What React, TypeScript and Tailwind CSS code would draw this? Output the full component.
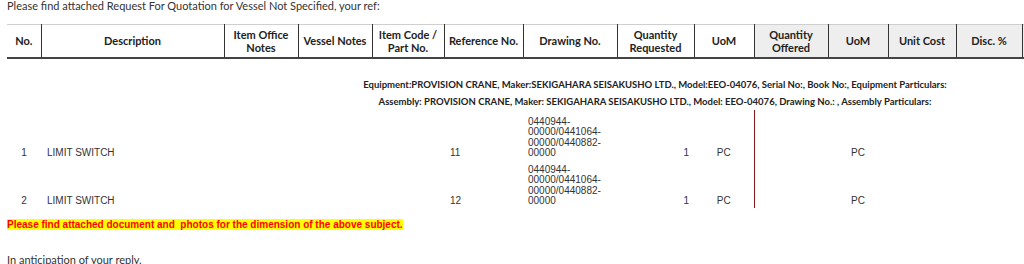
import React from "react";

const calibri = { fontFamily: 'Lato, "Open Sans", sans-serif' };
const arial = { fontFamily: '"Liberation Sans", Arial, sans-serif' };

const headers: { label: React.ReactNode; w: string; gray?: boolean }[] = [
  { label: "No.", w: "w-[34px]" },
  { label: "Description", w: "w-[183px]" },
  { label: <>Item Office<br />Notes</>, w: "w-[74px]" },
  { label: "Vessel Notes", w: "w-[74px]" },
  { label: <>Item Code /<br />Part No.</>, w: "w-[72px]" },
  { label: "Reference No.", w: "w-[79px]" },
  { label: "Drawing No.", w: "w-[94px]" },
  { label: <>Quantity<br />Requested</>, w: "w-[77px]" },
  { label: "UoM", w: "w-[60px]" },
  { label: <>Quantity<br />Offered</>, w: "w-[74px]", gray: true },
  { label: "UoM", w: "w-[60px]", gray: true },
  { label: "Unit Cost", w: "w-[68px]", gray: true },
  { label: "Disc. %", w: "w-[66px]", gray: true },
  { label: "", w: "w-[90px]", gray: true },
  { label: "", w: "w-[95px]", gray: true },
  { label: "", w: "w-[96px]", gray: true },
];

const rows = [
  { no: "1", desc: "LIMIT SWITCH", ref: "11" },
  { no: "2", desc: "LIMIT SWITCH", ref: "12" },
];

export default function App() {
  return (
    <div className="w-[1024px] h-[264px] overflow-hidden bg-white text-[#333]">
      <div className="pl-[7px] pt-0 text-[11px] leading-[12px]" style={calibri}>
        Please find attached Request For Quotation for Vessel Not Specified, your ref:
      </div>
      <table className="ml-[7px] mt-[12px] table-fixed border-collapse w-[1296px]">
        <colgroup>
          {headers.map((h, i) => (
            <col key={i} className={h.w} />
          ))}
        </colgroup>
        <thead>
          <tr className="h-[33px] border-t border-t-[#cfcfcf] border-b-2 border-b-[#444]">
            {headers.map((h, i) => (
              <th
                key={i}
                className={`p-0 text-center align-middle font-bold text-[11px] leading-[13px] text-[#222] border-r border-r-[#333] ${
                  h.gray ? "bg-[#eeeeee]" : "bg-white"
                }`}
                style={calibri}
              >
                {h.label}
              </th>
            ))}
          </tr>
        </thead>
        <tbody>
          <tr>
            <td colSpan={16} className="pt-[17px] pb-0 text-center font-bold text-[9.5px] leading-[18px] text-[#222]" style={calibri}>
              Equipment:PROVISION CRANE, Maker:SEKIGAHARA SEISAKUSHO LTD., Model:EEO-04076, Serial No:, Book No:, Equipment Particulars:
            </td>
          </tr>
          <tr>
            <td colSpan={16} className="p-0 text-center font-bold text-[9.5px] leading-[16px] text-[#222]" style={calibri}>
              Assembly: PROVISION CRANE, Maker: SEKIGAHARA SEISAKUSHO LTD., Model: EEO-04076, Drawing No.: , Assembly Particulars:
            </td>
          </tr>
          {rows.map((r, idx) => (
            <tr
              key={r.no}
              className={`${idx === 0 ? "h-[50px]" : "h-[48px]"} align-bottom text-[10px] leading-[10.4px] text-[#333]`}
              style={arial}
            >
              <td className="p-0 pb-[1px] text-center">{r.no}</td>
              <td className="p-0 pb-[1px] pl-[6px]">{r.desc}</td>
              <td className="p-0" />
              <td className="p-0" />
              <td className="p-0" />
              <td className="p-0 pb-[1px] pl-[6px]">{r.ref}</td>
              <td className="p-0 pb-[1px] pl-[5px] pr-[6px] break-words">
                0440944-00000/0441064-00000/0440882-00000
              </td>
              <td className="p-0 pb-[1px] pr-[5px] text-right">1</td>
              <td className="p-0 pb-[1px] text-center">PC</td>
              <td className="p-0 border-l border-l-[#8b1a1a]" />
              <td className="p-0 pb-[1px] text-center">PC</td>
              <td className="p-0" />
              <td className="p-0" />
              <td className="p-0" />
              <td className="p-0" />
              <td className="p-0" />
            </tr>
          ))}
        </tbody>
      </table>
      <div className="pl-[7px] mt-[11px] text-[10px] leading-[11px]">
        <span
          className="bg-[#ffff00] text-[#ff0000] font-bold text-[10px] leading-[11px] whitespace-pre"
          style={arial}
        >
          Please find attached document and  photos for the dimension of the above subject.
        </span>
      </div>
      <div className="pl-[7px] mt-[24px] text-[11px] leading-[12px] text-[#333]" style={calibri}>
        In anticipation of your reply.
      </div>
    </div>
  );
}
